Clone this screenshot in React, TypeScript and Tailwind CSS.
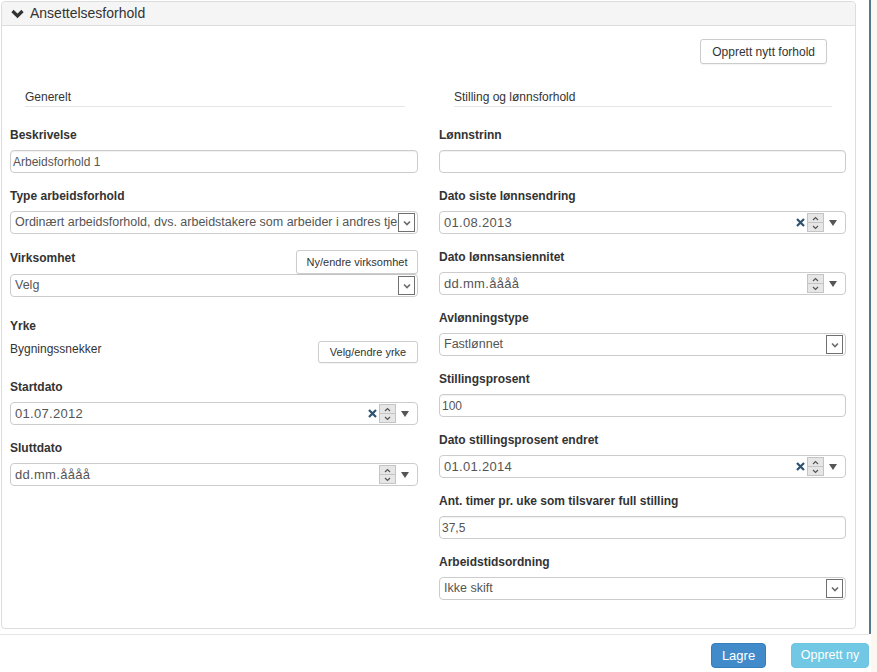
import React from "react";

function SelectArrow() {
  return (
    <div className="mr-[2px] flex h-[19px] w-[17px] shrink-0 items-center justify-center border border-[#707070] bg-white">
      <svg width="8" height="6" viewBox="0 0 8 6">
        <polyline points="1,1.5 4,4.5 7,1.5" fill="none" stroke="#6a6a6a" strokeWidth="1.6" />
      </svg>
    </div>
  );
}

function Spinner() {
  return (
    <div className="flex h-[19px] w-[17px] shrink-0 flex-col border border-[#c4c4c4] bg-[#e6e6e6]">
      <div className="flex flex-1 items-center justify-center border-b border-[#c4c4c4]">
        <svg width="7" height="5" viewBox="0 0 7 5">
          <polyline points="1,4 3.5,1.5 6,4" fill="none" stroke="#555" strokeWidth="1.2" />
        </svg>
      </div>
      <div className="flex flex-1 items-center justify-center">
        <svg width="7" height="5" viewBox="0 0 7 5">
          <polyline points="1,1 3.5,3.5 6,1" fill="none" stroke="#555" strokeWidth="1.2" />
        </svg>
      </div>
    </div>
  );
}

function TextInput({ value }: { value?: string }) {
  return (
    <div className="flex h-[23px] items-center rounded-[4px] border border-[#ccc] bg-white px-[2px] text-[12px] text-[#555] shadow-[inset_0_1px_1px_rgba(0,0,0,0.06)]">
      {value}
    </div>
  );
}

function SelectInput({ value }: { value: string }) {
  return (
    <div className="flex h-[23px] items-center rounded-[4px] border border-[#ccc] bg-white pl-[4px] text-[12.5px] text-[#555]">
      <span className="min-w-0 flex-1 overflow-hidden whitespace-nowrap">{value}</span>
      <SelectArrow />
    </div>
  );
}

function DateInput({ value, clear }: { value: string; clear?: boolean }) {
  return (
    <div className="flex h-[23px] items-center rounded-[4px] border border-[#ccc] bg-white pl-[4px] pr-[8px] text-[13px] tracking-[0.3px] text-[#555]">
      <span className="flex-1">{value}</span>
      {clear && (
        <svg width="9" height="9" viewBox="0 0 9 9" className="mr-[2px]">
          <path d="M1 1L8 8M8 1L1 8" stroke="#2f5272" strokeWidth="2.2" />
        </svg>
      )}
      <Spinner />
      <svg width="8" height="6" viewBox="0 0 8 6" className="ml-[5px]">
        <polygon points="0,0 8,0 4,6" fill="#555" />
      </svg>
    </div>
  );
}

function Field({ label, children }: { label: string; children: React.ReactNode }) {
  return (
    <div className="mb-[16px]">
      <div className="mb-[8px] text-[12px] font-bold leading-[14px] text-[#333]">{label}</div>
      {children}
    </div>
  );
}

function SmallButton({ children, className }: { children: React.ReactNode; className?: string }) {
  return (
    <button className={`rounded-[3px] border border-[#ccc] bg-white text-[#333] shadow-[0_1px_1px_rgba(0,0,0,0.05)] ${className ?? ""}`}>
      {children}
    </button>
  );
}

function SectionTitle({ title }: { title: string }) {
  return (
    <div className="border-b border-[#e5e5e5] pb-[2px] text-[12px] leading-[14px] text-[#333]">
      {title}
    </div>
  );
}

export default function App() {
  return (
    <div className="flex h-[672px] w-[877px] bg-white font-['Liberation_Sans',Arial,sans-serif]">
      <div className="flex w-[869px] flex-col">
        <div className="ml-px mt-px h-[628px] w-[855px] rounded-[4px] border border-[#ddd]">
          <div className="flex h-[24px] items-center gap-[6px] rounded-t-[4px] border-b border-[#ddd] bg-[#f5f5f5] pl-[9px] text-[14px] text-[#333]">
            <svg width="13" height="10" viewBox="0 0 13 10">
              <polyline points="1.5,2 6.5,7 11.5,2" fill="none" stroke="#333" strokeWidth="3.2" />
            </svg>
            <span>Ansettelsesforhold</span>
          </div>

          <div className="px-[8px]">
            <div className="mt-[13px] flex justify-end pr-[20px]">
              <SmallButton className="h-[25px] px-[11px] text-[12px]">Opprett nytt forhold</SmallButton>
            </div>

            <div className="mt-[26px] flex gap-[21px]">
              {/* left column */}
              <div className="w-[408px]">
                <div className="ml-[15px] mr-[13px]">
                  <SectionTitle title="Generelt" />
                </div>
                <div className="mt-[21px]">
                  <Field label="Beskrivelse">
                    <TextInput value="Arbeidsforhold 1" />
                  </Field>
                  <Field label="Type arbeidsforhold">
                    <SelectInput value="Ordinært arbeidsforhold, dvs. arbeidstakere som arbeider i andres tjeneste" />
                  </Field>
                  <div className="flex h-[24px] items-start justify-between">
                    <span className="mt-px text-[12px] font-bold leading-[14px] text-[#333]">Virksomhet</span>
                    <SmallButton className="h-[24px] w-[122px] text-[11px]">Ny/endre virksomhet</SmallButton>
                  </div>
                  <SelectInput value="Velg" />
                  <div className="mt-[22px] text-[12px] font-bold leading-[14px] text-[#333]">Yrke</div>
                  <div className="mt-[8px] flex h-[22px] items-start justify-between">
                    <span className="mt-px text-[12px] leading-[14px] text-[#333]">Bygningssnekker</span>
                    <SmallButton className="h-[22px] w-[100px] text-[11px]">Velg/endre yrke</SmallButton>
                  </div>
                  <div className="mt-[17px]">
                    <Field label="Startdato">
                      <DateInput value="01.07.2012" clear />
                    </Field>
                    <Field label="Sluttdato">
                      <DateInput value="dd.mm.åååå" />
                    </Field>
                  </div>
                </div>
              </div>

              {/* right column */}
              <div className="w-[407px]">
                <div className="ml-[15px] mr-[14px]">
                  <SectionTitle title="Stilling og lønnsforhold" />
                </div>
                <div className="mt-[21px]">
                  <Field label="Lønnstrinn">
                    <TextInput />
                  </Field>
                  <Field label="Dato siste lønnsendring">
                    <DateInput value="01.08.2013" clear />
                  </Field>
                  <Field label="Dato lønnsansiennitet">
                    <DateInput value="dd.mm.åååå" />
                  </Field>
                  <Field label="Avlønningstype">
                    <SelectInput value="Fastlønnet" />
                  </Field>
                  <Field label="Stillingsprosent">
                    <TextInput value="100" />
                  </Field>
                  <Field label="Dato stillingsprosent endret">
                    <DateInput value="01.01.2014" clear />
                  </Field>
                  <Field label="Ant. timer pr. uke som tilsvarer full stilling">
                    <TextInput value="37,5" />
                  </Field>
                  <Field label="Arbeidstidsordning">
                    <SelectInput value="Ikke skift" />
                  </Field>
                </div>
              </div>
            </div>
          </div>
        </div>

        <div className="mt-[5px] flex justify-end gap-[25px] border-t border-[#e5e5e5] pt-[8px]">
          <button className="h-[25px] w-[55px] rounded-[4px] border border-[#357ebd] bg-[#428bca] text-[13px] text-white">
            Lagre
          </button>
          <button className="h-[25px] w-[78px] rounded-[4px] border border-[#6cc6e2] bg-[#70c8e4] text-[12.5px] text-white">
            Opprett ny
          </button>
        </div>
      </div>
      <div className="h-[634px] w-[2px] bg-[#52798d]" />
      <div className="h-full flex-1 bg-[#fdf6f1]" />
    </div>
  );
}
